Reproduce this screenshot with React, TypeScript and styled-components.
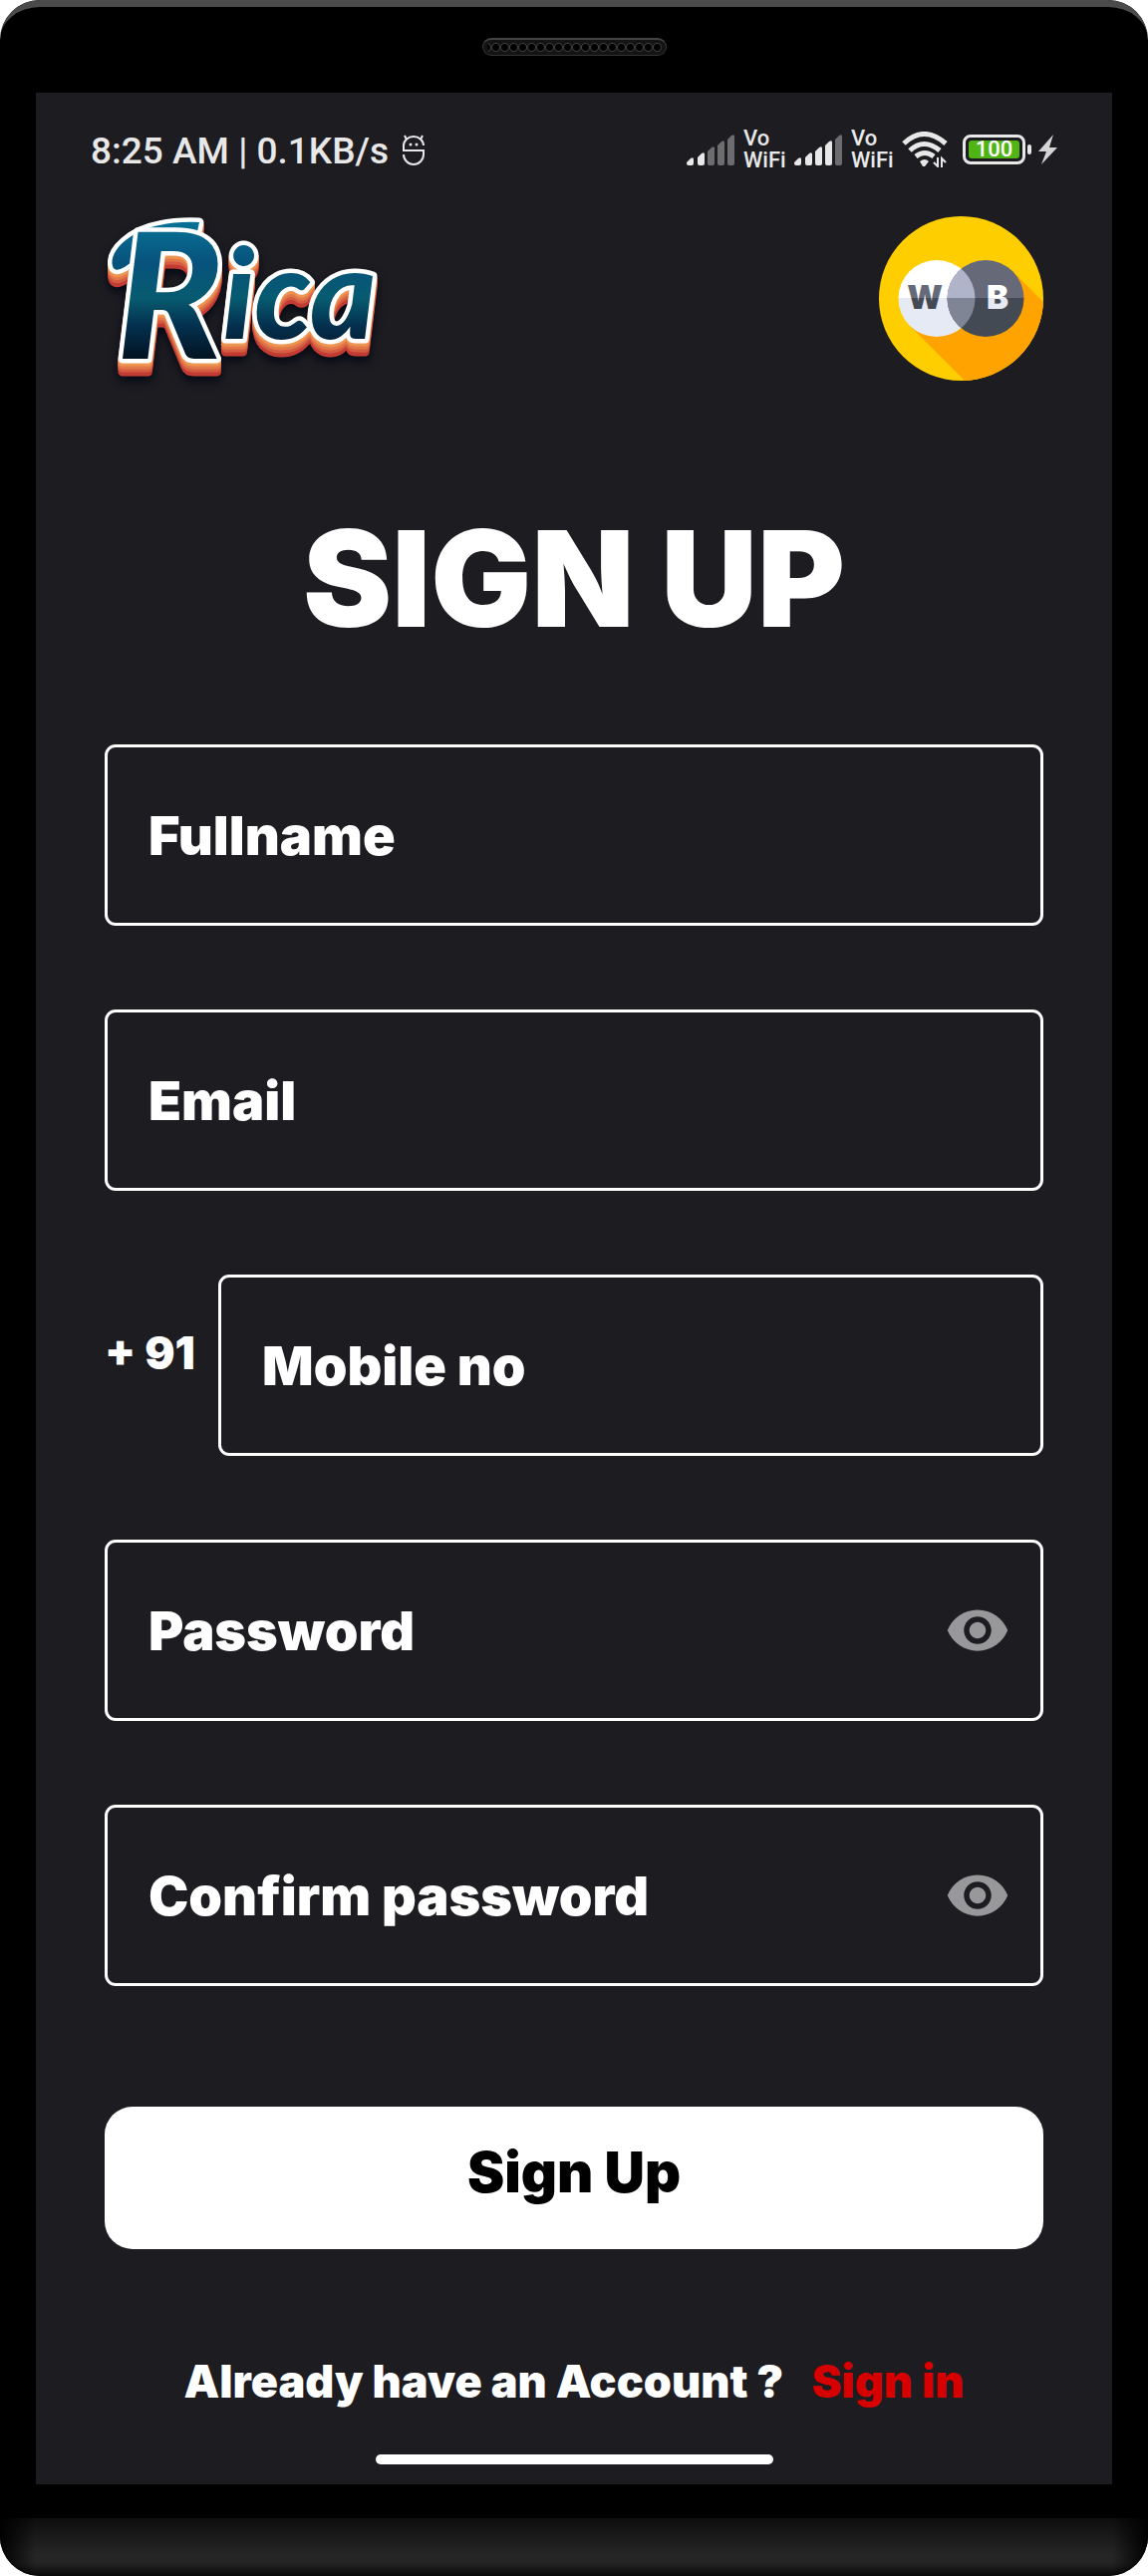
import React, { useState } from "react";
import styled, { createGlobalStyle } from "styled-components";

const GlobalStyle = createGlobalStyle`
  *, *::before, *::after { box-sizing: border-box; }
  body { margin: 0; background: #fff; font-family: Inter, "Open Sans", sans-serif; }
`;

const ink = "#1d1c21";
const status = "#e8e8e8";

const Phone = styled.div`
  display: flex;
  flex-direction: column;
  overflow: hidden;
  border-radius: 40px;
  background: #000;
`;

const TopBezel = styled.div`
  display: flex;
  justify-content: center;
  height: 93px;
  padding-top: 31px;
  border-top: 7px solid #4b4b4b;
  border-radius: 40px 40px 0 0;
`;

const Speaker = styled.div`
  width: 185px;
  height: 18px;
  padding: 0 4px;
  border: 1px solid #333;
  border-top: 2px solid #444;
  border-radius: 9px;
  background: radial-gradient(circle at center, #000 3px, #3c3c3c 4px, #141414 5px) 4px 0 / 9px 15px repeat-x content-box, #141414;
`;

const Screen = styled.div`
  display: flex;
  flex-direction: column;
  margin: 0 36px;
  padding: 38px 0 20px;
  background: ${ink};
`;

const Chin = styled.div`
  height: 58px;
  margin-top: 34px;
  background:
    linear-gradient(90deg, #000, transparent 36px, transparent calc(100% - 36px), #000),
    linear-gradient(#0d0d0d, #262626 64%, #242424 78%, #080808);
`;

const StatusBar = styled.div`
  display: flex;
  align-items: center;
  justify-content: space-between;
  height: 38px;
  padding: 0 55px;
  color: ${status};
`;

const StatusGroup = styled.div<{ $gap: number }>`
  display: flex;
  align-items: center;
  gap: ${(p) => p.$gap}px;
`;

const Clock = styled.span`
  font: 500 37px/42px Roboto, sans-serif;
  padding-top: 4px;
`;

const Carrier = styled.span`
  display: flex;
  flex-direction: column;
  width: 42px;
  font: 500 22px/22px Roboto, sans-serif;
`;

const BatteryLevel = styled.span`
  display: flex;
  align-items: center;
  justify-content: center;
  width: 63px;
  height: 30px;
  border: 3px solid ${status};
  border-radius: 8px;
  padding: 3px;
`;

const BatteryFill = styled.span`
  flex: 1;
  border-radius: 3px;
  background: #50b414;
  color: #fff;
  text-align: center;
  font: 500 22px/18px Roboto, sans-serif;
`;

const Battery = styled.div`
  display: flex;
  align-items: center;
  gap: 2px;

  &::after {
    content: "";
    width: 4px;
    height: 10px;
    border-radius: 2px;
    background: ${status};
  }
`;

const Main = styled.main`
  padding: 48px 69px 0;
`;

const Brands = styled.header`
  display: flex;
  justify-content: space-between;
  height: 165px;
`;

const RicaMark = styled.svg`
  width: 276px;
  height: 165px;
  overflow: visible;
`;

const Lettering = styled.g`
  font-family: Lato, sans-serif;
  font-weight: 900;
  font-style: italic;
  fill: url(#sea);
  stroke: #fff;
  stroke-width: 9px;
  stroke-linejoin: round;
  paint-order: stroke;
  filter: drop-shadow(0 3px 0 #ed9450) drop-shadow(0 3px 0 #e2784a) drop-shadow(0 3px 0 #d35c41) drop-shadow(0 4px 0 #c23c34) drop-shadow(0 5px 5px #050914);
`;

const Title = styled.h1`
  margin: 132px 0 101px;
  color: #fff;
  text-align: center;
  font-size: 134px;
  font-weight: 900;
  line-height: 132px;
`;

const Form = styled.form`
  display: flex;
  flex-direction: column;
  gap: 84px;
`;

const FieldRow = styled.div`
  display: flex;
  align-items: center;
`;

const Prefix = styled.label`
  flex: none;
  width: 114px;
  padding-bottom: 24px;
  color: #fff;
  font-size: 45px;
  font-weight: 900;
  line-height: 60px;
  white-space: nowrap;
`;

const FieldBox = styled.div`
  display: flex;
  align-items: center;
  flex: 1 1 auto;
  min-width: 0;
  height: 182px;
  border: 3px solid #fff;
  border-radius: 11px;
`;

const Input = styled.input`
  flex: 1;
  min-width: 0;
  height: 100%;
  padding: 0 0 0 41px;
  border: 0;
  outline: 0;
  background: transparent;
  color: #fff;
  font: 900 54px Inter, sans-serif;

  &::placeholder { color: #fff; opacity: 1; }
`;

const Reveal = styled.button`
  display: flex;
  margin-right: 30px;
  padding: 0;
  border: 0;
  background: none;
  color: #98989a;
  cursor: pointer;
`;

const Submit = styled.button`
  height: 143px;
  margin-top: 37px;
  padding: 0 0 12px;
  border: 0;
  border-radius: 28px;
  background: #fff;
  color: #000;
  font: 900 56px Inter, sans-serif;
  cursor: pointer;
`;

const Prompt = styled.p`
  display: flex;
  justify-content: center;
  gap: 28px;
  margin: 103px 0 43px;
  color: #fff;
  font-size: 45px;
  font-weight: 900;
  line-height: 60px;
  white-space: nowrap;
`;

const SignInLink = styled.a`
  color: #d60000;
  text-decoration: none;
`;

const HomeBar = styled.div`
  align-self: center;
  width: 399px;
  height: 10px;
  border-radius: 5px;
  background: #fff;
`;

function Signal({ level }: { level: number }) {
  const tops = [23, 18, 12, 6, 0];
  return (
    <svg width="48" height="31" viewBox="0 0 48 31" aria-label="Signal">
      {tops.map((t, i) => {
        const x = i === 0 ? 0 : 1 + i * 10;
        return (
          <path
            key={t}
            d={`M${x} ${t + 5}l4-4q3-2 3 1V29q0 2-2 2h-3q-2 0-2-2z`}
            fill={i < level ? status : "#6d6d70"}
          />
        );
      })}
    </svg>
  );
}

function Robot() {
  return (
    <svg width="22" height="31" viewBox="0 0 22 31" fill="none" stroke={status} strokeWidth="2">
      <path d="M1 14V11a10 9 0 0 1 20 0M1 10v6h20v4a10 10 0 0 1-20 0M4 5L2 1M18 5l2-4" />
      <circle cx="8" cy="10" r="1.5" fill={status} stroke="none" />
      <circle cx="14" cy="10" r="1.5" fill={status} stroke="none" />
    </svg>
  );
}

function Wifi() {
  return (
    <svg width="46" height="36" viewBox="0 0 46 36" fill="none" stroke={status} strokeWidth="5">
      <path d="M2 12Q22-7 44 12M8 19q14-13 30 0M14 25q9-7 18 0" />
      <path d="M18 30q5-4 9 0l-4 5h-2z" fill={status} stroke="none" />
      <path d="M36 26v9l-4-4M40 36v-9l4 4" strokeWidth="2" />
    </svg>
  );
}

function Bolt() {
  return (
    <svg width="19" height="30" viewBox="0 0 19 30" fill="#d4d4d4">
      <path d="M15 0L0 17h8L3 30l16-17h-8z" />
    </svg>
  );
}

function RicaLogo() {
  return (
    <RicaMark viewBox="0 0 276 165" role="img" aria-label="Rica">
      <defs>
        <linearGradient id="sea" gradientUnits="userSpaceOnUse" x1="0" y1="5" x2="0" y2="145">
          <stop offset="0" stopColor="#087397" />
          <stop offset="0.3" stopColor="#07527c" />
          <stop offset="0.55" stopColor="#075b70" />
          <stop offset="0.75" stopColor="#04304e" />
          <stop offset="1" stopColor="#02111f" />
        </linearGradient>
      </defs>
      <Lettering>
        <path d="M8 50C4 34 27 14 55 9q18-4 40-3l-4 19Q64 23 40 37L20 51q-10 6-12-1z" />
        <text x="12" y="143" fontSize="176">
          R<tspan fontSize="126" dy="-20">ica</tspan>
        </text>
      </Lettering>
    </RicaMark>
  );
}

function WbLogo() {
  return (
    <svg width="165" height="165" viewBox="0 0 165 165" role="img" aria-label="WB">
      <defs>
        <clipPath id="disc"><circle cx="82.5" cy="82.5" r="82.5" /></clipPath>
        <clipPath id="left"><circle cx="58" cy="82.5" r="38.5" /></clipPath>
        <linearGradient id="dark" gradientUnits="userSpaceOnUse" x1="0" y1="0" x2="0" y2="164">
          <stop offset="0.5" stopColor="#656978" /><stop offset="0.5" stopColor="#434a53" />
        </linearGradient>
        <linearGradient id="light" gradientUnits="userSpaceOnUse" x1="0" y1="0" x2="0" y2="164">
          <stop offset="0.5" stopColor="#fff" /><stop offset="0.5" stopColor="#e6eaf4" />
        </linearGradient>
        <linearGradient id="mid" gradientUnits="userSpaceOnUse" x1="0" y1="0" x2="0" y2="164">
          <stop offset="0.5" stopColor="#b0b4ca" /><stop offset="0.5" stopColor="#808596" />
        </linearGradient>
      </defs>
      <circle cx="82.5" cy="82.5" r="82.5" fill="#ffce00" />
      <path clipPath="url(#disc)" fill="#ffa300" d="M31 110l55 55h79V86l-31-31z" />
      <circle cx="58" cy="82.5" r="38.5" fill="url(#light)" />
      <circle cx="107" cy="82.5" r="38.5" fill="url(#dark)" />
      <circle cx="107" cy="82.5" r="38.5" fill="url(#mid)" clipPath="url(#left)" />
      <g fontFamily="Inter, sans-serif" fontWeight="900" fontSize="33" textAnchor="middle">
        <text x="46" y="93" fill="url(#dark)">W</text>
        <text x="119" y="93" fill="url(#light)">B</text>
      </g>
    </svg>
  );
}

function PasswordField({ label }: { label: string }) {
  const [shown, setShown] = useState(false);
  return (
    <FieldBox>
      <Input type={shown ? "text" : "password"} placeholder={label} aria-label={label} />
      <Reveal type="button" aria-label={`Show ${label}`} onClick={() => setShown(!shown)}>
        <svg width="66" height="66" viewBox="0 0 24 24" fill="currentColor">
          <path d="M12 4.500C7 4.500 2.730 7.610 1 12c1.730 4.390 6 7.500 11 7.500s9.270-3.110 11-7.500c-1.730-4.390-6-7.500-11-7.500zM12 17c-2.760 0-5-2.240-5-5s2.240-5 5-5 5 2.240 5 5-2.240 5-5 5zm0-8c-1.660 0-3 1.340-3 3s1.340 3 3 3 3-1.340 3-3-1.340-3-3-3z" />
        </svg>
      </Reveal>
    </FieldBox>
  );
}

function CarrierLabel() {
  return <Carrier><span>Vo</span><span>WiFi</span></Carrier>;
}

export default function App() {
  return (
    <Phone>
      <GlobalStyle />
      <TopBezel><Speaker /></TopBezel>
      <Screen>
        <StatusBar>
          <StatusGroup $gap={14}>
            <Clock>8:25 AM | 0.1KB/s</Clock>
            <Robot />
          </StatusGroup>
          <StatusGroup $gap={15}>
            <StatusGroup $gap={9}>
              <Signal level={2} />
              <CarrierLabel />
              <Signal level={4} />
              <CarrierLabel />
              <Wifi />
            </StatusGroup>
            <StatusGroup $gap={7}>
              <Battery>
                <BatteryLevel><BatteryFill>100</BatteryFill></BatteryLevel>
              </Battery>
              <Bolt />
            </StatusGroup>
          </StatusGroup>
        </StatusBar>
        <Main>
          <Brands>
            <RicaLogo />
            <WbLogo />
          </Brands>
          <Title>SIGN UP</Title>
          <Form onSubmit={(e) => e.preventDefault()}>
            <FieldBox><Input type="text" placeholder="Fullname" aria-label="Fullname" /></FieldBox>
            <FieldBox><Input type="email" placeholder="Email" aria-label="Email" /></FieldBox>
            <FieldRow>
              <Prefix htmlFor="mobile">+ 91</Prefix>
              <FieldBox><Input id="mobile" type="tel" placeholder="Mobile no" /></FieldBox>
            </FieldRow>
            <PasswordField label="Password" />
            <PasswordField label="Confirm password" />
            <Submit type="submit">Sign Up</Submit>
          </Form>
          <Prompt>
            <span>Already have an Account ?</span>
            <SignInLink href="#signin">Sign in</SignInLink>
          </Prompt>
        </Main>
        <HomeBar />
      </Screen>
      <Chin />
    </Phone>
  );
}
